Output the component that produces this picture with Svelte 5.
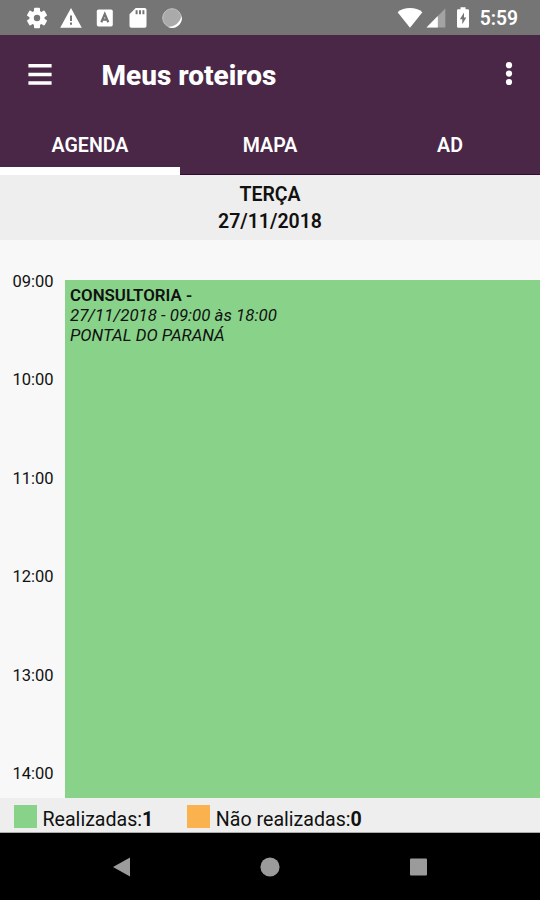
<script lang="ts">
    const tabs = ['AGENDA', 'MAPA', 'AD'];
    const hours = ['09:00', '10:00', '11:00', '12:00', '13:00', '14:00'];

    let active = $state('AGENDA');

    const done = 1;
    const pending = 0;
</script>

<div class="phone">
    <div class="status">
        <div class="notifications">
            <svg width="24" height="24" viewBox="0 0 24 24">
                <g fill="#fff">
                    <circle cx="12" cy="12" r="7.6" />
                    {#each [0, 60, 120] as angle}
                        <rect x="9" y="1.8" width="6" height="20.4" rx="1" transform="rotate({angle} 12 12)" />
                    {/each}
                </g>
                <circle cx="12" cy="12" r="3.2" fill="#757575" />
            </svg>
            <svg width="24" height="24" viewBox="0 0 24 24">
                <path fill="#fff" d="M12 2 L22.8 21.7 H1.2 Z" />
                <path fill="#757575" d="M11 9.5h2v5.4h-2zM11 16.6h2v2.2h-2z" />
            </svg>
            <svg width="24" height="24" viewBox="0 0 24 24">
                <rect x="3.8" y="3.5" width="16" height="17" rx="1.8" fill="#fff" />
                <path fill="none" stroke="#757575" stroke-width="2.2" d="M8.3 16.2 L11.8 8 L15.3 16.2 M9.5 13.6h4.6" />
            </svg>
            <svg width="24" height="24" viewBox="0 0 24 24">
                <path fill="#fff" d="M9.7 2 H18.7 A1.8 1.8 0 0 1 20.5 3.8 V20 A1.8 1.8 0 0 1 18.7 21.8 H5.3 A1.8 1.8 0 0 1 3.5 20 V8.2 Z" />
                <path fill="#757575" d="M9.6 4.2h2v4h-2zM13 4.2h2v4h-2zM16.4 4.2h2v4h-2z" />
            </svg>
            <svg width="24" height="24" viewBox="0 0 24 24">
                <circle cx="12" cy="12" r="9.3" fill="#aaa" stroke="#c4c4c4" />
                <path fill="#fff" d="M21.6 10 A9.8 9.8 0 0 1 8 21 C14.5 21 19.5 17 21.6 10 Z" />
            </svg>
        </div>
        <div class="system">
            <svg width="26" height="24" viewBox="0 0 26 24">
                <path fill="#fff" d="M13 21.8 L0.6 6.2 C4 3.2 8.2 2 13 2 S22 3.2 25.4 6.2 Z" />
            </svg>
            <svg width="20" height="24" viewBox="0 0 20 24">
                <path fill="#a3a3a3" d="M19.3 2.5 V21.5 H0.5 Z" />
                <path fill="#fff" d="M11.8 10 V21.5 H0.5 Z" />
            </svg>
            <svg class="battery" width="14" height="24" viewBox="0 0 14 24">
                <path fill="#fff" d="M4.5 1.2h5v2h2.3a1.2 1.2 0 0 1 1.2 1.2v16.2a1.2 1.2 0 0 1-1.2 1.2H2.2A1.2 1.2 0 0 1 1 20.6V4.4A1.2 1.2 0 0 1 2.2 3.2H4.5z" />
                <path fill="#757575" d="M8 6.5 L3.9 13.3 H6.3 V18.3 L10.3 11.5 H8 Z" />
            </svg>
            <span class="clock">5:59</span>
        </div>
    </div>

    <header>
        <div class="toolbar">
            <button aria-label="Menu">
                <svg width="24" height="24" viewBox="0 0 24 24">
                    <path fill="#fff" d="M0.4 1h23.2v3.6H0.4zM0.4 9.7h23.2v3.6H0.4zM0.4 18.2h23.2v3.6H0.4z" />
                </svg>
            </button>
            <h1>Meus roteiros</h1>
            <button aria-label="Mais">
                <svg width="8" height="26" viewBox="0 0 8 26">
                    <g fill="#fff">
                        <circle cx="4" cy="3.2" r="3.1" />
                        <circle cx="4" cy="11.6" r="3.1" />
                        <circle cx="4" cy="20" r="3.1" />
                    </g>
                </svg>
            </button>
        </div>
        <nav>
            {#each tabs as tab}
                <button class="tab" class:active={tab === active} onclick={() => (active = tab)}>{tab}</button>
            {/each}
        </nav>
    </header>

    <div class="day">
        <div>TERÇA</div>
        <div>27/11/2018</div>
    </div>

    <main>
        <div class="hours">
            {#each hours as hour}
                <div class="hour">{hour}</div>
            {/each}
        </div>
        <div class="event">
            <b>CONSULTORIA -</b>
            <i>27/11/2018 - 09:00 às 18:00</i>
            <i>PONTAL DO PARANÁ</i>
        </div>
    </main>

    <footer>
        <div class="legend">
            <span class="swatch done"></span>
            <span>Realizadas:<b>{done}</b></span>
        </div>
        <div class="legend">
            <span class="swatch pending"></span>
            <span>Não realizadas:<b>{pending}</b></span>
        </div>
    </footer>

    <div class="navbar">
        <svg width="20" height="20" viewBox="0 0 20 20"><path fill="#9b9b9b" d="M18 0.5 V19.5 L1 10 Z" /></svg>
        <svg width="20" height="20" viewBox="0 0 20 20"><circle cx="10" cy="10" r="9.6" fill="#9b9b9b" /></svg>
        <svg width="20" height="20" viewBox="0 0 20 20"><rect x="1" y="1.5" width="17" height="17" rx="1" fill="#9b9b9b" /></svg>
    </div>
</div>

<style>
    .phone {
        width: 540px;
        height: 900px;
        display: flex;
        flex-direction: column;
        overflow: hidden;
        background: #f8f8f8;
        color: #111;
        font-family: Roboto, sans-serif;
    }

    svg {
        display: block;
        flex: none;
    }

    button {
        padding: 0;
        border: none;
        background: none;
        color: inherit;
        font: inherit;
    }

    .status {
        flex: none;
        height: 35px;
        box-sizing: border-box;
        padding: 0 22px 0 25px;
        display: flex;
        align-items: center;
        justify-content: space-between;
        background: #757575;
        color: #fff;
    }

    .notifications {
        display: flex;
        gap: 9.8px;
    }

    .system {
        display: flex;
        align-items: center;
        gap: 3px;
    }

    .battery {
        margin-left: 7px;
    }

    .clock {
        margin-left: 7px;
        padding-top: 2px;
        font-size: 19.3px;
        font-weight: 600;
        line-height: 24px;
    }

    header {
        flex: none;
        height: 139px;
        display: flex;
        flex-direction: column;
        background: #4a2747;
        border-bottom: 1px solid #2f0f2d;
        color: #fff;
    }

    .toolbar {
        height: 80px;
        padding: 0 27px 0 28px;
        display: flex;
        align-items: center;
    }

    h1 {
        flex: 1;
        margin: 1px 0 0 49.5px;
        font-size: 28px;
        font-weight: 800;
    }

    nav {
        flex: 1;
        margin-bottom: -1px;
        display: grid;
        grid-template-columns: repeat(3, 1fr);
    }

    .tab {
        padding-top: 8px;
        border-bottom: 8px solid transparent;
        font-size: 19.6px;
        font-weight: 600;
    }

    .tab.active {
        border-bottom-color: #fff;
    }

    .day {
        flex: none;
        height: 65px;
        box-sizing: border-box;
        padding-top: 6px;
        background: #eee;
        text-align: center;
        font-size: 19.5px;
        font-weight: 600;
        line-height: 27px;
    }

    main {
        flex: 1;
        min-height: 0;
        padding-top: 40px;
        display: flex;
        overflow: hidden;
    }

    .hours {
        width: 65px;
        margin-top: -10px;
    }

    .hour {
        height: 98.4px;
        padding-left: 12.5px;
        font-size: 16.5px;
        line-height: 23px;
    }

    .event {
        flex: 1;
        padding: 6px 5px;
        display: flex;
        flex-direction: column;
        background: #88d389;
        font-size: 16.85px;
        line-height: 19.8px;
    }

    .event b {
        font-weight: 600;
    }

    footer {
        flex: none;
        height: 35px;
        box-sizing: border-box;
        padding-left: 14px;
        display: flex;
        gap: 34px;
        background: #eee;
        border-bottom: 1px solid #aaa;
        font-size: 19.6px;
    }

    .legend {
        display: flex;
        align-items: center;
        gap: 5.5px;
        line-height: 24px;
    }

    .legend span:last-child {
        padding-top: 10px;
    }

    .swatch {
        width: 23px;
        height: 23px;
        margin-top: 2px;
    }

    .swatch.done {
        background: #88d389;
    }

    .swatch.pending {
        background: #f9b24e;
    }

    .navbar {
        flex: none;
        height: 67px;
        display: flex;
        align-items: center;
        justify-content: center;
        gap: 128.5px;
        background: #000;
    }
</style>
